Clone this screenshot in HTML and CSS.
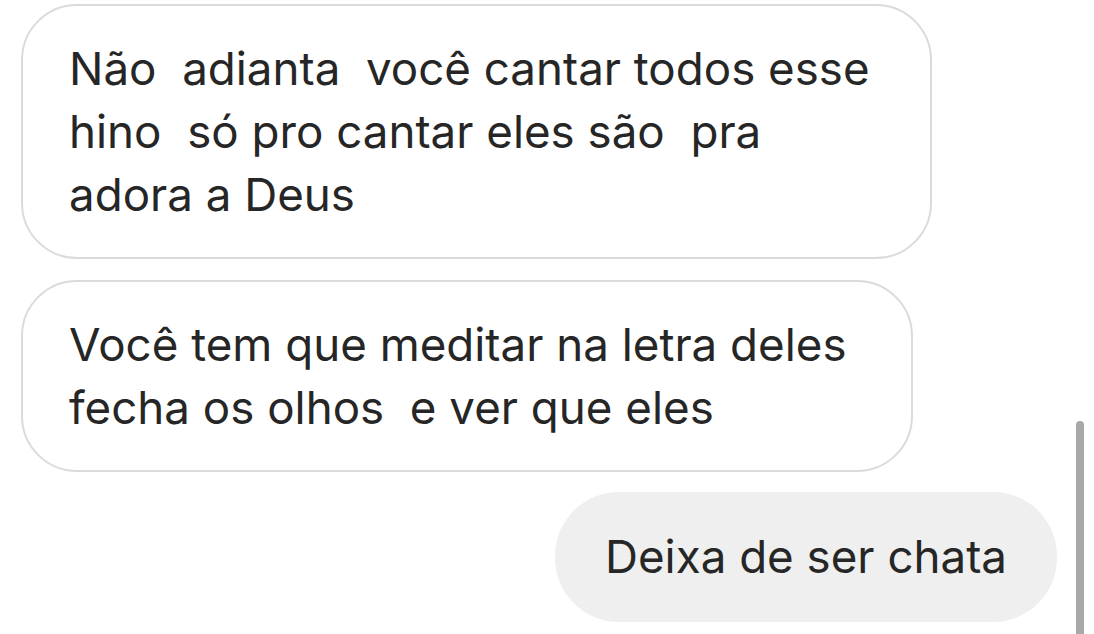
FILE: index.html
```html
<!DOCTYPE html>
<html lang="pt">
<head>
<meta charset="utf-8">
<link rel="stylesheet" href="styles.css">
</head>
<body>
<div class="chat">
  <div class="bubble received">Não  adianta  você cantar todos esse<br>hino  só pro cantar eles são  pra<br>adora a Deus</div>
  <div class="bubble received second">Você tem que meditar na letra deles<br>fecha os olhos  e ver que eles</div>
  <div class="bubble sent">Deixa de ser chata</div>
</div>
<div class="scrollbar"></div>
</body>
</html>
```

FILE: styles.css
```css
html, body {
  margin: 0;
  padding: 0;
  background: #ffffff;
  width: 1094px;
  height: 634px;
  overflow: hidden;
}

body {
  position: relative;
  font-family: Inter, Roboto, "Liberation Sans", sans-serif;
  color: #262626;
}

.chat {
  display: flex;
  flex-direction: column;
  gap: 20px;
  padding: 4px 37px 0 21px;
}

.bubble {
  width: fit-content;
  box-sizing: border-box;
  font-size: 45.7px;
  line-height: 63px;
  white-space: pre-wrap;
  border-radius: 56px;
}

.received {
  border: 2.5px solid #dbdbdb;
  padding: 31px 60px 31px 46px;
  background: #ffffff;
}

.second {
  margin-top: 1px;
  padding-right: 64px;
}

.sent {
  align-self: flex-end;
  background: #efefef;
  border-radius: 64px;
  padding: 33px 50px 34px 50px;
}

.scrollbar {
  position: absolute;
  left: 1076px;
  top: 421px;
  width: 8px;
  height: 220px;
  background: #a9a9a9;
  border-radius: 4px;
}
```
